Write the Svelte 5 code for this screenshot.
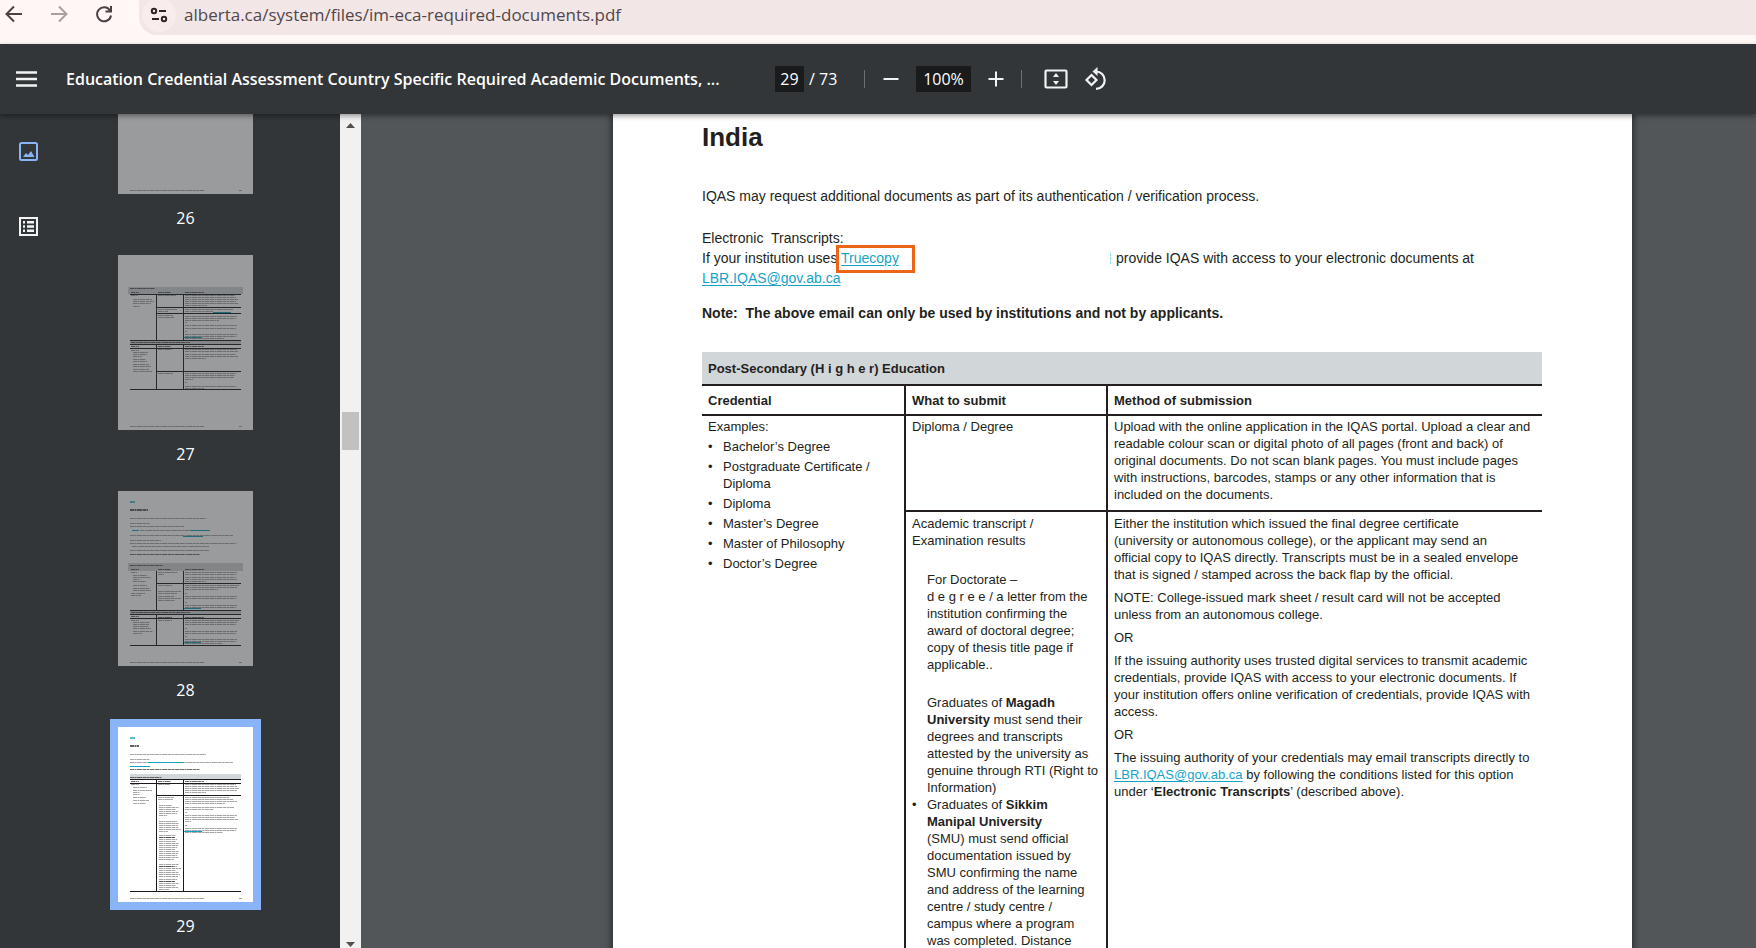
<script lang="ts">
  // ── Thumbnail drawing data ─────────────────────────────────────────────
  // A text run is [x, y, widths of its lines, step between lines]
  type Run = [number, number, number[], number?]
  // A rule or bar is [x, y, width, height]
  type Box = [number, number, number, number]

  interface Thumb {
    page: number
    runs: Run[]
    bold: Run[]
    bands: Box[]
    rules: Box[]
    links: Box[]
  }

  const footer: Run = [12, 171, [74]]
  const folio: Run = [121, 171, [3]]

  const thumbs: Thumb[] = [
    { page: 26, runs: [footer, folio], bold: [], bands: [], rules: [], links: [] },
    {
      page: 27,
      runs: [
        footer, folio,
        [13, 40, [7]], [15, 44, [19, 21, 18], 2], [15, 51, [7]],
        [40, 40, [18]], [40, 54, [19, 10], 2], [40, 60, [15]], [40, 62, [16]],
        [67, 40, [50, 51, 53, 51, 53, 22], 2], [67, 54, [48, 28], 2],
        [67, 61, [52, 51, 34], 2], [67, 67, [2]], [67, 70, [52, 51], 3],
        [67, 76, [2]], [67, 79, [52, 51, 39], 2],
        [13, 95, [8]], [15, 97, [15, 14, 9], 2], [15, 104, [13, 14], 2],
        [15, 109, [16, 18], 2], [15, 114, [16, 19], 2],
        [40, 94, [14]], [67, 94, [52, 53], 2], [67, 99, [51, 53, 21], 2],
        [40, 118, [15]], [67, 118, [51, 50, 49, 8], 2], [67, 127, [2]], [67, 131, [51, 20], 2],
      ],
      bold: [
        [12, 33, [25]], [13, 37, [8]], [40, 37, [13]], [67, 37, [19]],
        [13, 87, [59]], [13, 91, [8]], [40, 91, [13]], [67, 91, [19]],
      ],
      bands: [[10, 32, 115, 7], [12, 86, 111, 3]],
      rules: [
        [12, 39, 111, 1], [38, 52, 85, 1], [38, 58, 85, 1], [12, 85, 111, 1],
        [12, 89, 111, 1], [12, 93, 111, 1], [38, 116, 85, 1], [12, 134, 111, 1],
        [38, 39, 1, 46], [65, 39, 1, 46], [38, 89, 1, 46], [65, 89, 1, 46],
      ],
      links: [[95, 57, 18, 1], [66, 82, 18, 1]],
    },
    {
      page: 28,
      runs: [
        footer, folio,
        [12, 27, [76]], [12, 32, [20]], [12, 35, [54]], [22, 39, [50]], [12, 44, [103]],
        [12, 49, [31]], [12, 52, [106]], [14, 55, [77]], [12, 59, [79]],
        [13, 81, [6]], [15, 84, [14, 18, 7, 13], 2], [15, 94, [14]], [15, 97, [17, 18], 2], [13, 102, [14, 10], 2],
        [40, 81, [20, 6], 2], [40, 94, [14]], [40, 100, [23, 19], 2], [40, 105, [16, 23, 17], 2],
        [67, 81, [52, 51], 2], [67, 86, [51, 52, 21], 2], [67, 94, [54, 52, 33], 2],
        [67, 102, [2]], [67, 105, [52, 51], 2], [67, 111, [2]], [67, 114, [52, 51], 2],
        [13, 129, [8]], [15, 131, [17, 16, 15, 18], 2], [15, 140, [20, 9], 2],
        [40, 129, [14]], [67, 129, [54, 52, 51], 2], [67, 137, [2]], [67, 140, [52, 51], 2],
        [67, 145, [2]], [67, 148, [52, 51, 38], 2],
      ],
      bold: [
        [12, 63, [70]], [12, 74, [33]], [13, 78, [8]], [40, 78, [13]], [67, 78, [19]],
        [13, 121, [59]], [13, 125, [8]], [40, 126, [14]], [67, 126, [19]],
      ],
      bands: [[10, 72, 115, 8], [12, 120, 111, 3]],
      rules: [
        [38, 92, 85, 1], [12, 119, 111, 1], [12, 123, 111, 1], [12, 127, 111, 1], [12, 154, 111, 1],
        [38, 80, 1, 40], [65, 80, 1, 40], [38, 123, 1, 32], [65, 123, 1, 32],
      ],
      links: [[14, 39, 7, 1], [72, 39, 20, 1], [65, 45, 20, 1], [66, 117, 17, 1], [66, 151, 17, 1]],
    },
    {
      page: 29,
      runs: [
        footer, folio,
        [12, 27, [76]], [12, 32, [20]], [12, 35, [103]],
        [13, 57, [8]], [15, 60, [14]], [15, 63, [19, 7], 2], [15, 67, [7]], [15, 70, [13]], [15, 73, [16]], [15, 76, [13]],
        [40, 57, [12]], [67, 57, [51, 52, 54, 52, 21], 2],
        [40, 70, [16, 15], 2], [41, 78, [13, 20, 17, 19, 18, 8], 2],
        [41, 94, [18, 20, 19, 20, 22, 9], 2],
        [41, 108, [17, 16, 18, 17, 20, 19, 18, 16, 20, 19, 18, 20, 15], 2],
        [41, 137, [20, 18, 22, 17, 20, 21, 19], 2], [41, 152, [18, 16, 20, 17, 19, 10], 2],
        [67, 70, [45, 48, 52, 40], 2], [67, 80, [49, 28], 2], [67, 85, [2]],
        [67, 88, [52, 50, 53, 6], 2], [67, 98, [2]], [67, 101, [52, 51, 38], 2],
      ],
      bold: [
        [12, 42, [70]], [12, 50, [32]], [13, 54, [8]], [40, 54, [13]], [67, 54, [19]],
        [41, 110, [16]], [41, 139, [14]], [41, 154, [16]],
      ],
      bands: [[12, 47, 111, 5]],
      rules: [
        [12, 52, 111, 1], [12, 56, 111, 1], [38, 68, 85, 1], [12, 164, 111, 1],
        [38, 52, 1, 112], [65, 52, 1, 112],
      ],
      links: [[30, 35, 36, 1], [12, 39, 20, 1], [66, 104, 18, 1]],
    },
  ]

  // Width of the page heading on the thumbnails that have one
  const headings: Record<number, number> = { 28: 18, 29: 9 }

  const credentials = [
    ['Bachelor’s Degree'],
    ['Postgraduate Certificate /', 'Diploma'],
    ['Diploma'],
    ['Master’s Degree'],
    ['Master of Philosophy'],
    ['Doctor’s Degree'],
  ]

  let url = $state('alberta.ca/system/files/im-eca-required-documents.pdf')
  let pageText = $state('29')
  let zoomText = $state('100%')
  let current = $state(29)

  function goTo(page: number) {
    current = page
    pageText = String(page)
  }

  function zoomBy(step: number) {
    zoomText = `${Math.max(25, parseInt(zoomText) + step)}%`
  }
</script>

{#snippet textRun(run: Run, cls: string)}
  {#each run[2] as w, i}
    <line class={cls} x1={run[0]} x2={run[0] + w} y1={run[1] + i * (run[3] ?? 2) + 0.5} y2={run[1] + i * (run[3] ?? 2) + 0.5} />
  {/each}
{/snippet}

<div class="window">
  <!-- Browser bar -->
  <header class="browser">
    <button class="nav" aria-label="Back">
      <svg width="20" height="20" viewBox="0 0 20 20"><path d="M18 10H3M10 2.500L2.500 10l7.500 7.500" /></svg>
    </button>
    <button class="nav off" aria-label="Forward" disabled>
      <svg width="20" height="20" viewBox="0 0 20 20"><path d="M2 10h15M10 2.500L17.500 10 10 17.500" /></svg>
    </button>
    <button class="nav" aria-label="Reload">
      <svg width="20" height="20" viewBox="0 0 20 20"><path d="M16 6.500A7 7 0 1 0 17 11.500M17 2v5.500h-5.500" /></svg>
    </button>
    <div class="address">
      <button class="site" aria-label="Site information">
        <svg width="18" height="18" viewBox="0 0 18 18">
          <circle cx="4" cy="5" r="2.200" /><path d="M9 5h7" />
          <path d="M2 13h7" /><circle cx="14" cy="13" r="2.200" />
        </svg>
      </button>
      <input class="url" aria-label="Address" bind:value={url} />
    </div>
  </header>

  <!-- Viewer toolbar -->
  <div class="toolbar">
    <button class="tool menu" aria-label="Menu">
      <svg width="21" height="16" viewBox="0 0 21 16"><path d="M0 1.500h21M0 8h21M0 14.500h21" stroke-width="2.600" /></svg>
    </button>
    <span class="title">Education Credential Assessment Country Specific Required Academic Documents, ...</span>
    <input class="field page-no" aria-label="Page number" bind:value={pageText} />
    <span class="total">/ 73</span>
    <span class="sep first"></span>
    <button class="tool" aria-label="Zoom out" onclick={() => zoomBy(-10)}>
      <svg width="24" height="24" viewBox="0 0 24 24"><path d="M4.500 12h15" stroke-width="2" /></svg>
    </button>
    <input class="field zoom" aria-label="Zoom level" bind:value={zoomText} />
    <button class="tool" aria-label="Zoom in" onclick={() => zoomBy(10)}>
      <svg width="24" height="24" viewBox="0 0 24 24"><path d="M4.500 12h15M12 4.500v15" stroke-width="2" /></svg>
    </button>
    <span class="sep"></span>
    <button class="tool fit" aria-label="Fit to page">
      <svg width="24" height="24" viewBox="0 0 24 24">
        <rect x="1.500" y="3.500" width="21" height="17" rx="1" stroke-width="2.200" />
        <path class="solid" d="M12 6l3 4H9zM12 18l3-4H9z" />
      </svg>
    </button>
    <button class="tool rotate" aria-label="Rotate counterclockwise">
      <svg width="24" height="24" viewBox="0 0 24 24">
        <path d="M7.500 8l5 5-5 5-5-5zM12 4.500a8.700 8.700 0 1 1 0 17.400" stroke-width="2.200" />
        <path class="solid" d="M13.500 0v9L8.500 4.500z" />
      </svg>
    </button>
  </div>

  <div class="body">
    <!-- Side panel -->
    <nav class="modes">
      <button class="mode active" aria-label="Thumbnails">
        <svg width="19" height="19" viewBox="0 0 19 19">
          <rect x="1" y="1" width="17" height="17" rx="1.500" />
          <path class="solid" d="M4 15l3-4 2 2 3-4 3.500 6z" />
        </svg>
      </button>
      <button class="mode" aria-label="Document outline">
        <svg width="19" height="19" viewBox="0 0 19 19">
          <rect x="1" y="1" width="17" height="17" />
          <path class="solid" d="M4 4h2v2.500H4zM8 4h7v2.500H8zM4 8.200h2v2.500H4zM8 8.200h7v2.500H8zM4 12.500h2V15H4zM8 12.500h7V15H8z" />
        </svg>
      </button>
    </nav>

    <div class="thumbs">
      {#each thumbs as t}
        <button class="thumb" class:current={t.page === current} onclick={() => goTo(t.page)}>
          <svg width="135" height="175" viewBox="0 0 135 175">
            <rect class="paper" width="135" height="175" />
            {#each t.bands as [x, y, w, h]}
              <rect class="band" {x} {y} width={w} height={h} />
            {/each}
            {#each t.runs as r}{@render textRun(r, 'run')}{/each}
            {#each t.bold as r}{@render textRun(r, 'run strong')}{/each}
            {#each t.rules as [x, y, w, h]}
              <rect class="rule" {x} {y} width={w} height={h} />
            {/each}
            {#each t.links as [x, y, w, h]}
              <rect class="link" {x} {y} width={w} height={h} />
            {/each}
            {#if headings[t.page]}
              <rect class="link faint" x="12" y="10" width="5" height="2" />
              <line class="run heading" x1="12" x2={12 + headings[t.page]} y1="19" y2="19" />
            {/if}
          </svg>
          <span>{t.page}</span>
        </button>
      {/each}
    </div>

    <div class="scrollbar">
      <svg width="9" height="5" viewBox="0 0 9 5"><path d="M0 5L4.500 0 9 5z" /></svg>
      <div class="grip"></div>
      <svg width="9" height="5" viewBox="0 0 9 5"><path d="M0 0h9L4.500 5z" /></svg>
    </div>

    <!-- Document -->
    <main>
      <article>
        <h1>India</h1>
        <p class="lead">IQAS may request additional documents as part of its authentication / verification process.</p>
        <p>
          Electronic&nbsp; Transcripts:<br />
          <span class="split">
            <span>If your institution uses <span class="marked"><a href="#truecopy">Truecopy</a></span></span>
            <span class="rest">provide IQAS with access to your electronic documents at</span>
          </span>
          <a href="#mail">LBR.IQAS@gov.ab.ca</a>
        </p>
        <p class="note"><b>Note:&nbsp; The above email can only be used by institutions and not by applicants.</b></p>

        <table>
          <colgroup><col class="narrow" /><col class="narrow" /><col /></colgroup>
          <thead>
            <tr><th class="caption" colspan="3">Post-Secondary (H i g h e r) Education</th></tr>
            <tr class="heads"><th>Credential</th><th>What to submit</th><th>Method of submission</th></tr>
          </thead>
          <tbody>
            <tr class="diploma">
              <td rowspan="2">
                Examples:
                <ul>
                  {#each credentials as lines}
                    <li>{#each lines as line, i}{#if i}<br />{/if}{line}{/each}</li>
                  {/each}
                </ul>
              </td>
              <td>Diploma / Degree</td>
              <td>
                Upload with the online application in the IQAS portal. Upload a clear and<br />
                readable colour scan or digital photo of all pages (front and back) of<br />
                original documents. Do not scan blank pages. You must include pages<br />
                with instructions, barcodes, stamps or any other information that is<br />
                included on the documents.
              </td>
            </tr>
            <tr class="transcript">
              <td>
                Academic transcript /<br />
                Examination results
                <p class="inset">
                  For Doctorate –<br />
                  d e g r e e / a letter from the<br />
                  institution confirming the<br />
                  award of doctoral degree;<br />
                  copy of thesis title page if<br />
                  applicable..
                </p>
                <p class="inset">
                  Graduates of <b>Magadh</b><br />
                  <b>University</b> must send their<br />
                  degrees and transcripts<br />
                  attested by the university as<br />
                  genuine through RTI (Right to<br />
                  Information)
                </p>
                <ul class="tight">
                  <li>
                    Graduates of <b>Sikkim</b><br />
                    <b>Manipal University</b><br />
                    (SMU) must send official<br />
                    documentation issued by<br />
                    SMU confirming the name<br />
                    and address of the learning<br />
                    centre / study centre /<br />
                    campus where a program<br />
                    was completed. Distance
                  </li>
                </ul>
              </td>
              <td>
                <p>
                  Either the institution which issued the final degree certificate<br />
                  (university or autonomous college), or the applicant may send an<br />
                  official copy to IQAS directly. Transcripts must be in a sealed envelope<br />
                  that is signed / stamped across the back flap by the official.
                </p>
                <p>
                  NOTE: College-issued mark sheet / result card will not be accepted<br />
                  unless from an autonomous college.
                </p>
                <p>OR</p>
                <p>
                  If the issuing authority uses trusted digital services to transmit academic<br />
                  credentials, provide IQAS with access to your electronic documents. If<br />
                  your institution offers online verification of credentials, provide IQAS with<br />
                  access.
                </p>
                <p>OR</p>
                <p>
                  The issuing authority of your credentials may email transcripts directly to<br />
                  <a href="#mail">LBR.IQAS@gov.ab.ca</a> by following the conditions listed for this option<br />
                  under ‘<b>Electronic Transcripts</b>’ (described above).
                </p>
              </td>
            </tr>
          </tbody>
        </table>
      </article>
    </main>
  </div>
</div>

<style>
  :global(body) { margin: 0; }
  .window { display: flex; flex-direction: column; height: 100vh; overflow: hidden; font-family: "Open Sans", "Noto Sans", sans-serif; }
  button { padding: 0; border: 0; background: none; font: inherit; color: inherit; cursor: pointer; }
  input { border: 0; outline: 0; font: inherit; }
  svg { display: block; fill: none; }
  .solid { fill: currentColor; stroke: none; }

  /* Browser bar */
  .browser { display: flex; align-items: flex-start; gap: 25px; height: 44px; padding-left: 4px; background: #fff8f7; flex-shrink: 0; }
  .nav { margin-top: 4px; color: #4b4243; }
  .nav.off { color: #aaa09f; }
  .nav svg { stroke: currentColor; stroke-width: 2; }
  .address { flex: 1; display: flex; align-items: center; gap: 8px; height: 35px; box-sizing: border-box; padding: 0 0 6px 3px; background: #f2e6e7; border-bottom-left-radius: 18px; }
  .site { width: 34px; height: 34px; border-radius: 50%; background: #f8eced; display: flex; align-items: center; justify-content: center; color: #2f2526; }
  .site svg { stroke: currentColor; stroke-width: 2; }
  .url { flex: 1; height: 26px; padding: 0; font-size: 17px; color: #51464a; background: none; }

  /* Viewer toolbar */
  .toolbar { position: relative; z-index: 1; display: flex; align-items: center; height: 70px; padding-left: 16px; box-sizing: border-box; background: #323639; color: #fff; box-shadow: 0 2px 5px rgba(0, 0, 0, 0.4); flex-shrink: 0; }
  .tool { color: #f1f3f4; flex-shrink: 0; }
  .tool svg { stroke: currentColor; }
  .menu { margin-right: 29px; }
  .title { width: 709px; font-size: 16px; font-weight: 600; white-space: nowrap; overflow: hidden; flex-shrink: 0; }
  .field { height: 26px; padding: 0; box-sizing: border-box; background: #191b1c; color: #fff; font-size: 16px; text-align: center; }
  .page-no { width: 29px; }
  .zoom { width: 55px; margin: 0 13px; }
  .total { width: 29px; margin-left: 5px; font-size: 16px; white-space: nowrap; }
  .sep { width: 1px; height: 18px; margin: 0 0 0 13px; background: #6d7073; }
  .sep.first { margin: 0 14px 0 26px; }
  .fit { margin-left: 22px; }
  .rotate { margin-left: 16px; }

  /* Side panel */
  .body { flex: 1; min-height: 0; display: flex; background: #525659; }
  .modes { width: 57px; padding-top: 28px; display: flex; flex-direction: column; align-items: center; gap: 56px; background: #323639; color: #f1f3f4; flex-shrink: 0; }
  .mode svg { stroke: currentColor; stroke-width: 2; }
  .mode.active { color: #8ab4f8; }
  .thumbs { width: 257px; padding: 0 26px 12px 0; display: flex; flex-direction: column; align-items: center; justify-content: flex-end; gap: 27px; overflow: hidden; background: #323639; color: #fff; flex-shrink: 0; }
  .thumb { display: flex; flex-direction: column; align-items: center; gap: 14px; flex-shrink: 0; }
  .thumb svg { opacity: 0.5; }
  .thumb.current svg { opacity: 1; outline: 8px solid #8ab4f8; }
  .thumb span { font-size: 16px; line-height: 20px; }
  .paper { fill: #fff; }
  .band { fill: #d1d6d9; }
  .rule { fill: #1c1a1c; }
  .link { fill: #14a3bf; }
  .faint { opacity: 0.7; }
  .run { stroke: #231f20; stroke-width: 1; stroke-opacity: 0.4; stroke-dasharray: 4 0.500 2 0.500 5 0.500; }
  .strong { stroke-opacity: 0.65; }
  .heading { stroke-width: 2; stroke-opacity: 0.7; }

  .scrollbar { width: 21px; padding: 9px 0 1px; box-sizing: border-box; display: flex; flex-direction: column; align-items: center; justify-content: space-between; background: #f1f1f1; flex-shrink: 0; }
  .scrollbar svg { fill: #505050; }
  .grip { width: 17px; height: 38px; margin-bottom: 208px; background: #c1c1c1; }

  /* Document */
  main { flex: 1; padding-left: 128px; display: flex; justify-content: center; align-items: flex-start; overflow: hidden; }
  article { width: 1019px; box-sizing: border-box; padding: 8px 90px 96px 89px; background: #fff; color: #231f20; box-shadow: 0 0 6px 2px rgba(0, 0, 0, 0.45); font: 14px/20px Arial, "Liberation Sans", sans-serif; white-space: nowrap; flex-shrink: 0; }
  h1 { margin: 0; font-size: 26px; line-height: 30px; }
  p { margin: 0; }
  a { color: #14a3c7; text-underline-offset: 2px; }
  .lead { margin: 34px 0 22px; }
  .split { display: flex; }
  .split > :first-child { width: 408px; }
  .marked { position: relative; }
  .marked::after { content: ''; position: absolute; left: -5px; top: -5px; width: 73px; height: 22px; border: 3px solid #ec6519; }
  .rest { display: flex; align-items: center; gap: 5px; }
  .rest::before { content: ''; height: 11px; border-left: 1px dashed #8fdcec; }
  .note { margin: 15px 0 29px; }

  table { width: 100%; table-layout: fixed; border-spacing: 0; font-size: 13px; line-height: 17px; }
  .narrow { width: 202px; }
  th { text-align: left; }
  th, td { padding: 0 0 0 6px; border-top: 2px solid #231f20; border-left: 2px solid #231f20; vertical-align: top; }
  th:first-child, tr.diploma td:first-child { border-left: 0; }
  .caption { height: 32px; border-top: 0; background: #d1d6d9; vertical-align: middle; }
  .heads th { height: 28px; vertical-align: middle; }
  td { padding-top: 2px; }
  .diploma td { height: 92px; }
  .transcript td { padding-top: 3px; padding-bottom: 40px; }
  ul { margin: 3px 0 0; padding: 0; list-style: none; display: flex; flex-direction: column; gap: 3px; }
  li { position: relative; padding-left: 15px; }
  li::before { content: '•'; position: absolute; left: 0; }
  .inset { padding: 22px 0 0 15px; }
  .tight { margin-top: 0; }
  .inset + .inset { padding-top: 21px; }
  .transcript p + p:not(.inset) { margin-top: 6px; }
</style>
